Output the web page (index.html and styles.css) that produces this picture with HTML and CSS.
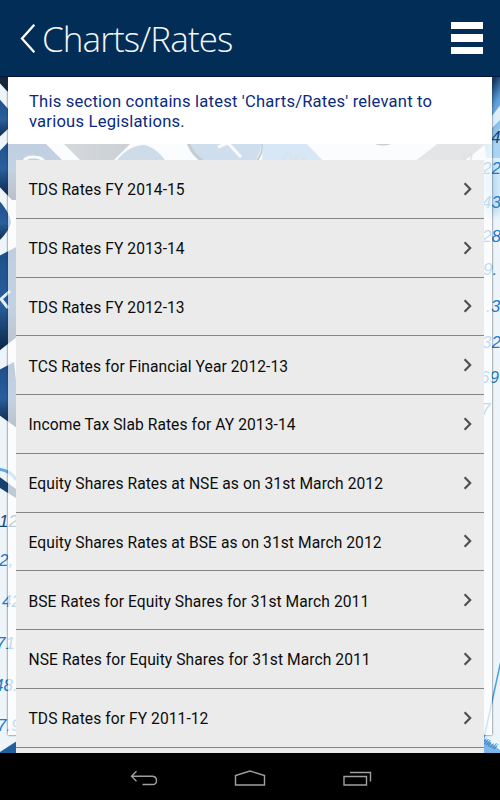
FILE: index.html
```
<!DOCTYPE html>
<html lang="en">
<head>
    <meta charset="UTF-8">
    <meta name="viewport" content="width=device-width, initial-scale=1.0">
    <title>Charts/Rates</title>
    <link rel="stylesheet" href="styles.css">
</head>
<body>

    <!-- Calculator keys and figures behind the page -->
    <svg class="backdrop" viewBox="0 0 500 800" aria-hidden="true">
        <defs>
            <linearGradient id="key" x1="0" y1="0" x2="0" y2="1">
                <stop offset="0" stop-color="#1c4d88"/>
                <stop offset="0.55" stop-color="#2a5f9d"/>
                <stop offset="1" stop-color="#08213f"/>
            </linearGradient>
            <linearGradient id="corner" x1="0" y1="0" x2="0.4" y2="1">
                <stop offset="0" stop-color="#4d88c2"/>
                <stop offset="0.35" stop-color="#12375f"/>
                <stop offset="0.6" stop-color="#5b9cd8"/>
                <stop offset="1" stop-color="#a9d3f3"/>
            </linearGradient>
            <linearGradient id="wedge" x1="0" y1="0" x2="1" y2="0">
                <stop offset="0" stop-color="#6d7782"/>
                <stop offset="1" stop-color="#44586d"/>
            </linearGradient>
            <filter id="soft"><feGaussianBlur stdDeviation="0.6"/></filter>
            <filter id="softer"><feGaussianBlur stdDeviation="3"/></filter>
        </defs>
        <rect width="500" height="800" fill="#edf4fa"/>
        <g filter="url(#soft)">
            <path d="M-5 70H14V95L7 91L-5 78Z" fill="#14263b"/>
            <path d="M-5 94L10 111V127L-5 141Z" fill="url(#key)"/>
            <path d="M-5 156L14 136L32 130L62 160L65 200H12L-5 182Z" fill="url(#key)"/>
            <path d="M-5 196Q9 210 11 222Q10 231 -5 245Z" fill="url(#key)"/>
            <path d="M-5 258L18 246V336L-5 354Z" fill="url(#key)"/>
            <path d="M-5 372L14 362L18 400L17 428L-5 412Z" fill="url(#key)"/>
            <path d="M62 142H132L110 164H84Z" fill="url(#wedge)"/>
            <path d="M112 168Q124 146 144 145Q158 147 170 168Z" fill="#4f7fae"/>
            <path d="M187 130H262Q264 152 252 165H208Q190 156 187 130Z" fill="#5289bf"/>
            <path d="M188 142Q192 156 210 166" stroke="#304964" stroke-width="3" fill="none"/>
            <path d="M262 142Q264 154 254 164" stroke="#304964" stroke-width="2" fill="none"/>
            <path d="M263 140H303L326 164H262Z" fill="#72a9da"/>
            <path d="M410 165L440 142H488L460 165Z" fill="#9aa0a6"/>
            <path d="M372 143Q384 148 393 143Z" fill="#405060"/>
        </g>
        <g class="key-sign">
            <path d="M23 164Q24 156 35 157Q44 157 46 166"/>
            <path d="M218 147L228 143L241 157"/>
            <path d="M10 291L1 299L8 308"/>
        </g>
        <path d="M478 70H500V158H486Z" fill="url(#corner)"/>
        <path d="M504 100V116L486 134V124Z" fill="#dceefb" filter="url(#soft)"/>
        <path d="M485 165L500 158V215H485Z" fill="#bfe0f6" filter="url(#softer)"/>
        <g filter="url(#soft)">
            <path d="M-3 475L16 489V498L-3 486Z" fill="#173f6e"/>
            <path d="M-2 469Q12 471 16 480" stroke="#62a7df" stroke-width="3" fill="none"/>
            <path d="M-3 754L20 739V760H-3Z" fill="#24619d"/>
            <path d="M480 735L500 750V760H480Z" fill="#7db7e7"/>
        </g>
        <path d="M502 656L484 738" stroke="#49a0e8" stroke-width="1.5"/>
        <g class="figures">
            <text class="dim" x="281" y="162" transform="rotate(14 281 162)">DM</text>
            <text class="dim" x="459" y="163">11</text>
            <text class="dark" x="491" y="143">4</text>
            <text x="482" y="174">22</text>
            <text x="482" y="208">43</text>
            <text x="482" y="242">28</text>
            <text x="483" y="275">9.</text>
            <text x="486" y="312">.3</text>
            <text x="482" y="348">32</text>
            <text x="480" y="383">69</text>
            <text x="481" y="415">7</text>
            <text class="dark" x="-1" y="527">12</text>
            <text x="-1" y="566">2,</text>
            <text x="2" y="607">42</text>
            <text x="-4" y="649">710</text>
            <text x="-6" y="691">48.</text>
            <text x="-3" y="731">7.9</text>
            <text class="tiny" x="482" y="743" transform="rotate(28 482 743)">illuli</text>
        </g>
    </svg>

    <div class="screen">
        <header>
            <a class="back" href="#">
                <svg width="16" height="32" viewBox="0 0 16 32"><path d="M14.3 1.8L2 15.5L14.3 29.3"/></svg>
                <h1>Charts/Rates</h1>
            </a>
            <div class="menu-btn">
                <span></span>
                <span></span>
                <span></span>
            </div>
        </header>

        <main>
            <div class="panel">
                <p class="intro">This section contains latest 'Charts/Rates' relevant to various Legislations.</p>
                <ul class="rates">
                    <li>TDS Rates FY 2014-15 <svg class="arrow" viewBox="0 0 10 14"><path d="M1.6 1.2L7.2 7L1.6 12.8"/></svg></li>
                    <li>TDS Rates FY 2013-14 <svg class="arrow" viewBox="0 0 10 14"><path d="M1.6 1.2L7.2 7L1.6 12.8"/></svg></li>
                    <li>TDS Rates FY 2012-13 <svg class="arrow" viewBox="0 0 10 14"><path d="M1.6 1.2L7.2 7L1.6 12.8"/></svg></li>
                    <li>TCS Rates for Financial Year 2012-13 <svg class="arrow" viewBox="0 0 10 14"><path d="M1.6 1.2L7.2 7L1.6 12.8"/></svg></li>
                    <li>Income Tax Slab Rates for AY 2013-14 <svg class="arrow" viewBox="0 0 10 14"><path d="M1.6 1.2L7.2 7L1.6 12.8"/></svg></li>
                    <li>Equity Shares Rates at NSE as on 31st March 2012 <svg class="arrow" viewBox="0 0 10 14"><path d="M1.6 1.2L7.2 7L1.6 12.8"/></svg></li>
                    <li>Equity Shares Rates at BSE as on 31st March 2012 <svg class="arrow" viewBox="0 0 10 14"><path d="M1.6 1.2L7.2 7L1.6 12.8"/></svg></li>
                    <li>BSE Rates for Equity Shares for 31st March 2011 <svg class="arrow" viewBox="0 0 10 14"><path d="M1.6 1.2L7.2 7L1.6 12.8"/></svg></li>
                    <li>NSE Rates for Equity Shares for 31st March 2011 <svg class="arrow" viewBox="0 0 10 14"><path d="M1.6 1.2L7.2 7L1.6 12.8"/></svg></li>
                    <li>TDS Rates for FY 2011-12 <svg class="arrow" viewBox="0 0 10 14"><path d="M1.6 1.2L7.2 7L1.6 12.8"/></svg></li>
                    <li class="next-row"></li>
                </ul>
            </div>
        </main>

        <footer>
            <svg width="28" height="18" viewBox="0 0 28 18"><path d="M6.5 1.2L1.5 6.2L6.5 11.2M1.5 6.2H22Q26.5 6.2 26.5 10.5T22 14.5H12.5"/></svg>
            <svg width="32" height="18" viewBox="0 0 32 18"><path d="M1.5 15V5.5L16 1L30.5 5.5V15Z"/></svg>
            <svg width="30" height="18" viewBox="0 0 30 18"><path d="M2 6.5H24.5V15H2ZM8 2.5H28.5V11.5"/></svg>
        </footer>
    </div>

</body>
</html>
```
FILE: styles.css
```
* {
    box-sizing: border-box;
}
body {
    font-family: Roboto, sans-serif;
    margin: 0;
    padding: 0;
    background-color: #edf4fa;
}
/* Background picture */
.backdrop {
    position: absolute;
    top: 0;
    left: 0;
    width: 500px;
    height: 800px;
    z-index: -1;
}
.key-sign {
    fill: none;
    stroke: #e6f1f9;
    stroke-width: 3;
}
.figures {
    font-family: "Liberation Sans", sans-serif;
    font-size: 17px;
    font-style: italic;
    fill: #207bc9;
}
.figures .dim {
    fill: #8b9299;
    font-size: 15px;
}
.figures .dark {
    fill: #174777;
}
.figures .tiny {
    font-size: 9px;
}
.screen {
    display: flex;
    flex-direction: column;
    width: 500px;
    height: 800px;
    overflow: hidden;
}
header {
    display: flex;
    align-items: center;
    justify-content: space-between;
    flex: none;
    height: 77px;
    padding: 0 17px 0 20px;
    background-color: #022d57;
    border-bottom: 1px solid #02123c;
}
.back {
    display: flex;
    align-items: center;
    gap: 6px;
    padding-top: 1px;
    color: #f4f6f8;
    text-decoration: none;
}
.back svg {
    fill: none;
    stroke: #fff;
    stroke-width: 2.3;
}
h1 {
    margin: 0;
    font-family: "Open Sans", sans-serif;
    font-size: 35px;
    font-weight: 300;
    letter-spacing: -0.88px;
    line-height: 48px;
}
.menu-btn {
    display: flex;
    flex-direction: column;
    gap: 5px;
    width: 32px;
}
.menu-btn span {
    height: 7.6px;
    background-color: #fff;
}
main {
    flex: 1;
    min-height: 0;
    padding: 0 8px;
    overflow: hidden;
}
.panel {
    height: 658px;
    background-color: rgba(255, 255, 255, 0.72);
    box-shadow: 0 0 2px rgba(40, 50, 60, 0.9);
}
.intro {
    height: 67px;
    margin: 0;
    padding: 15px 40px 0 21px;
    background-color: #fff;
    color: #0b2a80;
    font-size: 16.6px;
    letter-spacing: 0.2px;
    line-height: 20px;
}
.rates {
    list-style: none;
    margin: 16px 8px 0;
    padding: 0;
}
.rates li {
    display: flex;
    align-items: center;
    justify-content: space-between;
    height: 58.75px;
    padding: 3px 11px 0 12.5px;
    background-color: #ebebeb;
    border-bottom: 1px solid #858585;
    color: #0c0c0c;
    font-size: 15.6px;
    letter-spacing: 0.07px;
}
.rates .next-row {
    height: 10px;
    border-bottom: none;
}
.arrow {
    width: 10px;
    height: 14px;
    margin-bottom: 3px;
    fill: none;
    stroke: #505050;
    stroke-width: 2.2;
}
/* Android navigation bar */
footer {
    display: flex;
    align-items: center;
    justify-content: space-between;
    flex: none;
    height: 47px;
    padding: 4px 128px 0 130px;
    background-color: #000;
}
footer svg {
    fill: none;
    stroke: #a0a0a0;
    stroke-width: 1.4;
}
```
